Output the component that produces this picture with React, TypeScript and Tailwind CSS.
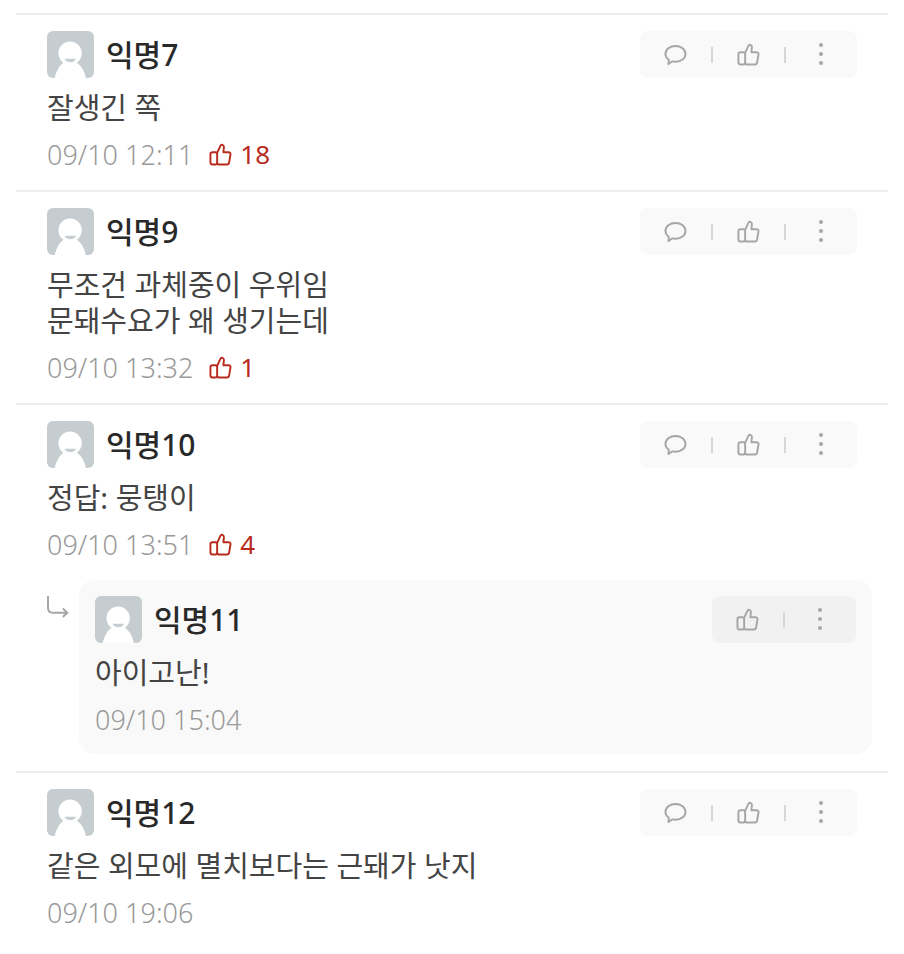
import { Fragment } from "react";

interface Comment {
  author: string;
  lines: string[];
  date: string;
  likes?: number;
  replies?: Comment[];
}

const comments: Comment[] = [
  { author: "익명7", lines: ["잘생긴 쪽"], date: "09/10 12:11", likes: 18 },
  {
    author: "익명9",
    lines: ["무조건 과체중이 우위임", "문돼수요가 왜 생기는데"],
    date: "09/10 13:32",
    likes: 1,
  },
  {
    author: "익명10",
    lines: ["정답: 뭉탱이"],
    date: "09/10 13:51",
    likes: 4,
    replies: [{ author: "익명11", lines: ["아이고난!"], date: "09/10 15:04" }],
  },
  {
    author: "익명12",
    lines: ["같은 외모에 멸치보다는 근돼가 낫지"],
    date: "09/10 19:06",
  },
];

function Avatar() {
  return (
    <svg viewBox="0 0 47 47" className="size-[47px] shrink-0 rounded-md bg-[#c5cdd0]" aria-hidden="true">
      <path
        d="M7.700 47C9.500 40 12 35 16.500 31.800A11.700 11.700 0 1 1 29.700 31.800C34.500 35 37.500 40 38.800 47Z"
        fill="#fff"
      />
      <path d="M17.500 27.800H29C28 30 26 31.200 23.300 31.200S18.500 30 17.500 27.800Z" fill="#c5cdd0" />
    </svg>
  );
}

function ThumbIcon() {
  return (
    <svg
      viewBox="0 0 24 24"
      className="size-[23px] shrink-0"
      fill="none"
      stroke="currentColor"
      strokeWidth="2"
      strokeLinejoin="round"
      aria-hidden="true"
    >
      <path d="M8.500 10.300L12 2.800C12.700 1.200 15.600 1.700 15.600 4.400L15 9.600H20.300C21.900 9.600 22.700 10.600 22.400 12L21 20.200C20.800 21.700 20 22.400 18.700 22.400H10.300C9 22.400 8.500 21.500 8.500 20.400Z" />
      <path d="M8.500 11.600C8.500 10.400 7.800 9.600 6.700 9.600H3.700C2.300 9.600 1.500 10.400 1.500 11.600V20.300C1.500 21.700 2.300 22.400 3.700 22.400H6.700C7.800 22.400 8.500 21.700 8.500 20.400" />
    </svg>
  );
}

function BubbleIcon() {
  return (
    <svg
      viewBox="0 0 24 24"
      className="size-[23px]"
      fill="none"
      stroke="currentColor"
      strokeWidth="2"
      strokeLinejoin="round"
      aria-hidden="true"
    >
      <path d="M4.700 22L5 17.400C2.800 15.900 1.500 14 1.500 11.500C1.500 6.800 6.200 3.200 12 3.200S22.400 6.800 22.400 11.500S17.800 19.500 12 19.500C10.900 19.500 9.800 19.400 8.800 19.100Z" />
    </svg>
  );
}

function MoreIcon() {
  return (
    <svg viewBox="0 0 23 23" className="size-[23px]" fill="currentColor" aria-hidden="true">
      <circle cx="11" cy="2" r="2" />
      <circle cx="11" cy="11" r="2" />
      <circle cx="11" cy="20" r="2" />
    </svg>
  );
}

function ReplyArrow() {
  return (
    <svg
      viewBox="0 0 24 24"
      className="mt-4 size-6 shrink-0 text-[#a6a6a6]"
      fill="none"
      stroke="currentColor"
      strokeWidth="2"
      aria-hidden="true"
    >
      <path d="M1 0V12C1 15.300 2.800 16.700 5.500 16.700H20.500M15.800 12.400L20.300 16.700L15.800 21" />
    </svg>
  );
}

function Actions({ isReply }: { isReply?: boolean }) {
  const actions = [
    { label: "대댓글", Icon: BubbleIcon },
    { label: "공감", Icon: ThumbIcon },
    { label: "더보기", Icon: MoreIcon },
  ].slice(isReply ? 1 : 0);

  return (
    <div
      className={`flex h-[47px] shrink-0 items-center rounded-lg text-[#a6a6a6] ${
        isReply ? "bg-[#f1f1f1]" : "bg-[#f9f9f9]"
      }`}
    >
      {actions.map(({ label, Icon }, index) => (
        <Fragment key={label}>
          {index > 0 && <span className="h-4 w-0.5 bg-[#d6d6d6]" />}
          <button type="button" aria-label={label} className="flex h-full w-[71px] items-center justify-center">
            <Icon />
          </button>
        </Fragment>
      ))}
    </div>
  );
}

function CommentBody({ comment, isReply }: { comment: Comment; isReply?: boolean }) {
  return (
    <>
      <div className="flex items-center justify-between">
        <div className="flex items-center gap-3">
          <Avatar />
          <h3 className="text-[30px] leading-9 font-medium text-[#292929]">{comment.author}</h3>
        </div>
        <Actions isReply={isReply} />
      </div>
      <p className="mt-3 text-[29px] leading-9 text-[#444]">
        {comment.lines.map((line) => (
          <span key={line} className="block">
            {line}
          </span>
        ))}
      </p>
      <div className="mt-[11px] flex h-[34px] items-center gap-4 text-[27px] leading-none font-light">
        <time className="text-[#999]">{comment.date}</time>
        {comment.likes && (
          <span className="flex items-center gap-2 text-[#b82b1c]">
            <ThumbIcon />
            <span className="text-[26px] font-normal">{comment.likes}</span>
          </span>
        )}
      </div>
    </>
  );
}

export default function App() {
  return (
    <main className="min-h-screen bg-white px-4 pt-[13px] font-['Noto_Sans','Noto_Sans_CJK_KR',sans-serif]">
      <ul>
        {comments.map((comment) => (
          <li key={comment.author} className="border-t-2 border-[#ededed] pt-4 pr-4 pb-[17px] pl-[31px]">
            <article className="pr-[15px] pb-0.5">
              <CommentBody comment={comment} />
            </article>
            {comment.replies?.map((reply) => (
              <div key={reply.author} className="mt-[17px] flex gap-2">
                <ReplyArrow />
                <article className="flex-1 rounded-2xl bg-[#f9f9f9] px-4 pt-4 pb-[18px]">
                  <CommentBody comment={reply} isReply />
                </article>
              </div>
            ))}
          </li>
        ))}
      </ul>
    </main>
  );
}
